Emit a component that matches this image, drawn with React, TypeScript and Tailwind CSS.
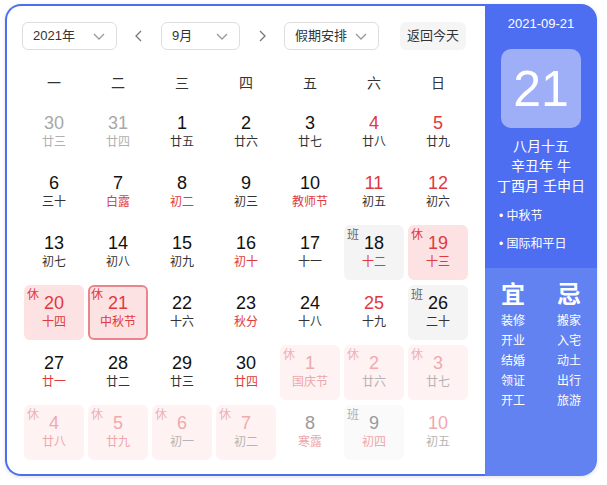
import React from "react";

type Day = {
  n: number;
  lunar: string;
  kind?: "prev" | "next";
  red?: boolean;
  lunarRed?: boolean;
  tag?: "休" | "班";
  selected?: boolean;
};

const rows: Day[][] = [
  [
    { n: 30, lunar: "廿三", kind: "prev" },
    { n: 31, lunar: "廿四", kind: "prev" },
    { n: 1, lunar: "廿五" },
    { n: 2, lunar: "廿六" },
    { n: 3, lunar: "廿七" },
    { n: 4, lunar: "廿八", red: true },
    { n: 5, lunar: "廿九", red: true },
  ],
  [
    { n: 6, lunar: "三十" },
    { n: 7, lunar: "白露", lunarRed: true },
    { n: 8, lunar: "初二", lunarRed: true },
    { n: 9, lunar: "初三" },
    { n: 10, lunar: "教师节", lunarRed: true },
    { n: 11, lunar: "初五", red: true },
    { n: 12, lunar: "初六", red: true },
  ],
  [
    { n: 13, lunar: "初七" },
    { n: 14, lunar: "初八" },
    { n: 15, lunar: "初九" },
    { n: 16, lunar: "初十", lunarRed: true },
    { n: 17, lunar: "十一" },
    { n: 18, lunar: "十二", lunarRed: true, tag: "班" },
    { n: 19, lunar: "十三", red: true, lunarRed: true, tag: "休" },
  ],
  [
    { n: 20, lunar: "十四", red: true, lunarRed: true, tag: "休" },
    { n: 21, lunar: "中秋节", red: true, lunarRed: true, tag: "休", selected: true },
    { n: 22, lunar: "十六" },
    { n: 23, lunar: "秋分", lunarRed: true },
    { n: 24, lunar: "十八" },
    { n: 25, lunar: "十九", red: true },
    { n: 26, lunar: "二十", tag: "班" },
  ],
  [
    { n: 27, lunar: "廿一", lunarRed: true },
    { n: 28, lunar: "廿二" },
    { n: 29, lunar: "廿三" },
    { n: 30, lunar: "廿四", lunarRed: true },
    { n: 1, lunar: "国庆节", kind: "next", red: true, lunarRed: true, tag: "休" },
    { n: 2, lunar: "廿六", kind: "next", red: true, tag: "休" },
    { n: 3, lunar: "廿七", kind: "next", red: true, tag: "休" },
  ],
  [
    { n: 4, lunar: "廿八", kind: "next", red: true, lunarRed: true, tag: "休" },
    { n: 5, lunar: "廿九", kind: "next", red: true, lunarRed: true, tag: "休" },
    { n: 6, lunar: "初一", kind: "next", red: true, tag: "休" },
    { n: 7, lunar: "初二", kind: "next", red: true, tag: "休" },
    { n: 8, lunar: "寒露", kind: "next", lunarRed: true },
    { n: 9, lunar: "初四", kind: "next", lunarRed: true, tag: "班" },
    { n: 10, lunar: "初五", kind: "next", red: true },
  ],
];

const font = { fontFamily: '"Liberation Sans", Arial, "Noto Sans CJK SC", sans-serif' };

function Chevron({ dir = "down", className = "" }: { dir?: "down" | "left" | "right"; className?: string }) {
  const d =
    dir === "down" ? "M3 6l5 5 5-5" : dir === "left" ? "M10 3L5 8l5 5" : "M6 3l5 5-5 5";
  return (
    <svg viewBox="0 0 16 16" className={className} fill="none" stroke="currentColor" strokeWidth="1.3">
      <path d={d} />
    </svg>
  );
}

function Select({ label, w }: { label: string; w: string }) {
  return (
    <div
      className={`${w} h-7 flex items-center justify-between pl-[10px] pr-[9px] border border-[#dedede] rounded-md text-[13px] text-[#333]`}
    >
      <span>{label}</span>
      <Chevron className="w-4 h-4 text-[#999]" />
    </div>
  );
}

function Cell({ d }: { d: Day }) {
  const faded = d.kind === "next";
  const prev = d.kind === "prev";
  let bg = "";
  if (d.tag === "休") bg = faded ? "bg-[#fef2f2]" : "bg-[#fde2e3]";
  if (d.tag === "班") bg = faded ? "bg-[#fafafa]" : "bg-[#f4f4f5]";
  const border = d.selected ? "border-2 border-[#e8868b]" : "";
  let num = "text-[#111]";
  if (prev) num = "text-[#a8a8a8]";
  else if (faded) num = d.red ? "text-[#f1a9ae]" : "text-[#9a9a9a]";
  else if (d.red) num = "text-[#e0393e]";
  let lun = "text-[#333]";
  if (prev) lun = "text-[#b0b0b0]";
  else if (faded) lun = d.lunarRed ? "text-[#eea7ac]" : "text-[#b4b4b4]";
  else if (d.lunarRed) lun = "text-[#e0393e]";
  const tagColor =
    d.tag === "休" ? (faded ? "text-[#f0b0b4]" : "text-[#e0393e]") : faded ? "text-[#b0b0b0]" : "text-[#666]";
  return (
    <div className={`relative h-[55px] rounded-md ${bg} ${border} flex flex-col items-center ${d.selected ? "pt-[5px]" : "pt-[7px]"}`}>
      {d.tag && (
        <span className={`absolute ${d.selected ? "left-[1px] top-0" : "left-[3px] top-[2px]"} text-[12px] leading-4 ${tagColor}`}>
          {d.tag}
        </span>
      )}
      <span className={`text-[18px] leading-[22px] ${num}`}>{d.n}</span>
      <span className={`text-[12px] leading-4 ${lun}`}>{d.lunar}</span>
    </div>
  );
}

export default function App() {
  return (
    <div className="w-[607px] h-[485px] bg-white pt-[4px] pl-[5px]" style={font}>
      <div className="w-[592px] h-[472px] flex rounded-2xl shadow-[0_1px_4px_rgba(0,0,0,0.12)]">
        {/* Calendar */}
        <div className="flex-1 bg-white border-2 border-r-0 border-[#4e6ef2] rounded-l-2xl pt-4 px-[15px]">
          <div className="flex items-center h-7">
            <Select label="2021年" w="w-[95px]" />
            <div className="w-[44px] flex justify-center">
              <Chevron dir="left" className="w-4 h-4 text-[#777]" />
            </div>
            <Select label="9月" w="w-[79px]" />
            <div className="w-[44px] flex justify-center">
              <Chevron dir="right" className="w-4 h-4 text-[#777]" />
            </div>
            <Select label="假期安排" w="w-[95px]" />
            <div className="ml-[21px] h-7 px-[7px] flex items-center bg-[#f5f5f6] rounded-md text-[13px] text-[#333]">
              返回今天
            </div>
          </div>

          <div className="grid grid-cols-7 gap-x-1 px-[2px] mt-[18px] h-[30px] items-center text-center text-[14px] text-[#333]">
            {["一", "二", "三", "四", "五", "六", "日"].map((w) => (
              <span key={w}>{w}</span>
            ))}
          </div>

          <div className="grid grid-cols-7 gap-x-1 gap-y-[5px] px-[2px] mt-[7px]">
            {rows.flat().map((d, i) => (
              <Cell key={i} d={d} />
            ))}
          </div>
        </div>

        {/* Side panel */}
        <div className="w-[112px] rounded-r-2xl overflow-hidden flex flex-col text-white">
          <div className="h-[264px] bg-[#4e6ef2] pt-[11px] flex flex-col items-center">
            <div className="text-[13px] leading-[18px]">2021-09-21</div>
            <div className="mt-[16px] w-[80px] h-[79px] rounded-[10px] bg-[#9eaff8] flex items-center justify-center text-[50px] leading-none">
              21
            </div>
            <div className="mt-[8px] text-[14px] leading-5 text-center">
              <div>八月十五</div>
              <div>辛丑年 牛</div>
              <div>丁酉月 壬申日</div>
            </div>
            <div className="self-start pl-[14px] mt-[12px] text-[12px] leading-4 flex flex-col gap-3">
              <div>• 中秋节</div>
              <div>• 国际和平日</div>
            </div>
          </div>
          <div className="flex-1 bg-[#6282f2] grid grid-cols-2 content-start pt-[13px] text-center">
            <div className="text-[24px] leading-7 font-bold">宜</div>
            <div className="text-[24px] leading-7 font-bold">忌</div>
            <div className="text-[12px] leading-5 mt-[2px] flex flex-col">
              {["装修", "开业", "结婚", "领证", "开工"].map((t) => (
                <span key={t}>{t}</span>
              ))}
            </div>
            <div className="text-[12px] leading-5 mt-[2px] flex flex-col">
              {["搬家", "入宅", "动土", "出行", "旅游"].map((t) => (
                <span key={t}>{t}</span>
              ))}
            </div>
          </div>
        </div>
      </div>
    </div>
  );
}
